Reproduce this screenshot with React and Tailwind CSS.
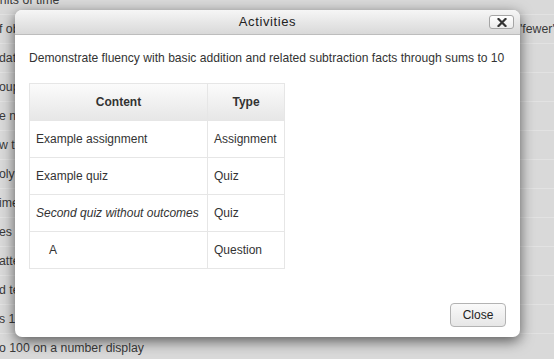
import React from 'react';

const rows = [
  'units of time',
  'f objects in two groups using the words "more", "same" and',
  'data in a picture graph',
  'oups of ten',
  'e numbers to 20',
  'w to read and write numbers',
  'olying patterns',
  'ime to the hour',
  'es and their attributes',
  'attern rules',
  'd ten more',
  's 1 to 100',
  'o 100 on a number display',
];

const items = [
  { name: 'Example assignment', type: 'Assignment' },
  { name: 'Example quiz', type: 'Quiz' },
  { name: 'Second quiz without outcomes', type: 'Quiz', italic: true },
  { name: 'A', type: 'Question', indent: true },
];

function Background() {
  return (
    <div className="-mt-[14px]">
      {rows.map((text, i) => (
        <div
          key={i}
          className="h-[29px] flex items-center border-b border-[#e2e2e2] whitespace-nowrap overflow-hidden text-[12.3px] text-[#3a3a3a]"
        >
          <span className={`${i === 0 ? '-ml-[7px]' : '-ml-[1px]'} ${i === 1 ? 'w-[519px] overflow-hidden shrink-0' : ''}`}>{text}</span>
          {i === 1 && <span>"fewer"</span>}
        </div>
      ))}
    </div>
  );
}

function CloseIcon() {
  return (
    <svg width="10" height="9" viewBox="0 0 10 9">
      <path d="M1.5 1 L8.5 8 M8.5 1 L1.5 8" stroke="#333" strokeWidth="2.2" strokeLinecap="square" />
    </svg>
  );
}

export default function App() {
  return (
    <div
      className="relative w-[554px] h-[359px] overflow-hidden bg-[#d9d9d9]"
      style={{ fontFamily: '"Liberation Sans", Arial, sans-serif' }}
    >
      <Background />

      {/* Activities dialog */}
      <div className="absolute left-[15px] top-[10px] w-[505px] h-[327px] bg-white rounded-[7px] shadow-[0_4px_14px_rgba(0,0,0,0.6)] flex flex-col overflow-hidden">
        <div className="relative h-[25px] shrink-0 flex items-center justify-center bg-gradient-to-b from-[#f6f6f6] to-[#d9d9d9] border-b border-[#bdbdbd]">
          <span className="text-[13px] tracking-[0.6px] text-[#222]">Activities</span>
          <button className="absolute right-[6px] top-[5px] w-[25px] h-[14px] flex items-center justify-center rounded-[3px] border border-[#a5a5a5] bg-gradient-to-b from-white to-[#ececec]">
            <CloseIcon />
          </button>
        </div>

        <div className="flex-1 flex flex-col px-[14px] pt-[15px]">
          <p className="text-[12.1px] leading-[16px] text-[#333] whitespace-nowrap">
            Demonstrate fluency with basic addition and related subtraction facts through sums to 10
          </p>

          <table className="mt-[17px] w-[256px] border-collapse text-[12px] text-[#333]">
            <thead>
              <tr className="h-[37px] bg-gradient-to-b from-[#fbfbfb] to-[#e6e6e6]">
                <th className="w-[178px] border border-[#e6e6e6] font-bold text-center">Content</th>
                <th className="border border-[#e6e6e6] font-bold text-center">Type</th>
              </tr>
            </thead>
            <tbody>
              {items.map((it) => (
                <tr key={it.name} className="h-[37px]">
                  <td className={`border border-[#e6e6e6] ${it.indent ? 'pl-[19px]' : 'pl-[6px]'} ${it.italic ? 'italic' : ''}`}>
                    {it.name}
                  </td>
                  <td className="border border-[#e6e6e6] pl-[6px]">{it.type}</td>
                </tr>
              ))}
            </tbody>
          </table>

          <div className="mt-auto mb-[10px] flex justify-end">
            <button className="w-[56px] h-[24px] rounded-[4px] border border-[#b3b3b3] bg-gradient-to-b from-[#fafafa] to-[#e6e6e6] text-[12px] text-[#222]">
              Close
            </button>
          </div>
        </div>
      </div>
    </div>
  );
}
